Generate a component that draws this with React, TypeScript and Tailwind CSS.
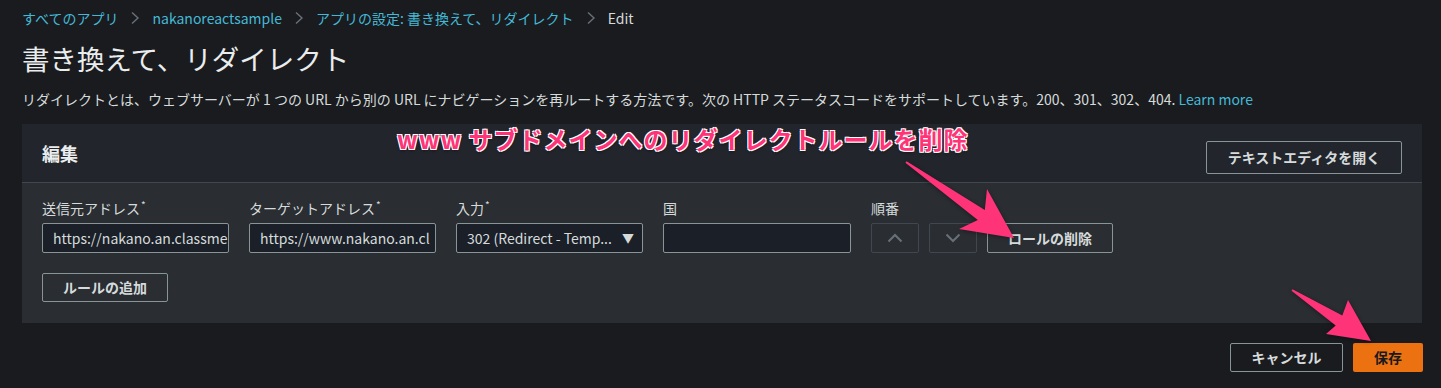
import React from 'react';

const font = '[font-family:"Noto_Sans_CJK_JP","Noto_Sans",sans-serif]';

const Chevron = () => (
  <svg width="10" height="14" viewBox="0 0 10 14" className="mx-[12px]">
    <path d="M2 1.5 L8 7 L2 12.5" fill="none" stroke="#687078" strokeWidth="1.4" />
  </svg>
);

const Field: React.FC<{ label: string; required?: boolean; children: React.ReactNode; width?: string }> = ({ label, required, children, width = 'w-[187px]' }) => (
  <div className={`flex flex-col ${width}`}>
    <div className="h-[20px] text-[14px] leading-[20px] text-[#d5dbdb]">
      {label}
      {required && <span className="relative -top-[5px] ml-[1px] text-[10px]">*</span>}
    </div>
    <div className="mt-[5px]">{children}</div>
  </div>
);

const TextBox: React.FC<{ value: string }> = ({ value }) => (
  <div className="h-[30px] overflow-hidden whitespace-nowrap rounded-[2px] border border-[#879596] bg-[#1b2028] px-[10px] text-[14px] leading-[28px] text-[#d5dbdb]">
    {value}
  </div>
);

const OutlineButton: React.FC<{ children: React.ReactNode; className?: string }> = ({ children, className = '' }) => (
  <button className={`flex items-center justify-center rounded-[2px] border border-[#879596] text-[14px] font-bold text-[#d5dbdb] ${className}`}>
    {children}
  </button>
);

const App: React.FC = () => {
  return (
    <div className={`relative h-[388px] w-[1441px] overflow-hidden bg-[#1a1b1f] pl-[22px] ${font}`}>
      {/* breadcrumb */}
      <div className="flex h-[20px] items-center pt-[16px] text-[14px] text-[#44b9d6]">
        <span>すべてのアプリ</span>
        <Chevron />
        <span>nakanoreactsample</span>
        <Chevron />
        <span>アプリの設定: 書き換えて、リダイレクト</span>
        <Chevron />
        <span className="text-[#d5dbdb]">Edit</span>
      </div>

      <h1 className="mt-[20px] text-[27.5px] leading-[36px] font-normal text-[#eaeded]">書き換えて、リダイレクト</h1>
      <p className="mt-[13px] text-[14px] leading-[20px] text-[#d5dbdb]">
        リダイレクトとは、ウェブサーバーが 1 つの URL から別の URL にナビゲーションを再ルートする方法です。次の HTTP ステータスコードをサポートしています。200、301、302、404.{' '}
        <span className="text-[#44b9d6]">Learn more</span>
      </p>

      {/* panel */}
      <div className="mt-[15px] w-[1400px] bg-[#2a2d32]">
        <div className="flex h-[59px] items-center justify-between border-b border-[#414750] bg-[#22252c] px-[20px]">
          <h2 className="text-[18px] font-bold text-[#eaeded]">編集</h2>
          <OutlineButton className="mt-[8px] h-[33px] w-[196px]">テキストエディタを開く</OutlineButton>
        </div>
        <div className="px-[20px] pt-[15px] pb-[21px]">
          <div className="flex gap-[20px]">
            <Field label="送信元アドレス" required>
              <TextBox value="https://nakano.an.classme" />
            </Field>
            <Field label="ターゲットアドレス" required>
              <TextBox value="https://www.nakano.an.cl" />
            </Field>
            <Field label="入力" required>
              <div className="flex h-[30px] items-center justify-between gap-[6px] rounded-[2px] border border-[#879596] bg-[#1b2028] pr-[8px] pl-[10px] text-[14px] text-[#d5dbdb]">
                <span className="whitespace-nowrap">302 (Redirect - Temp...</span>
                <span className="text-[12px]">▼</span>
              </div>
            </Field>
            <Field label="国" width="w-[188px]">
              <TextBox value="" />
            </Field>
            <Field label="順番" width="w-auto">
              <div className="flex gap-[10px]">
                <button className="flex h-[30px] w-[48px] items-center justify-center rounded-[2px] border border-[#414750]">
                  <svg width="16" height="10" viewBox="0 0 16 10">
                    <path d="M1.5 8.5 L8 2 L14.5 8.5" fill="none" stroke="#687078" strokeWidth="2" />
                  </svg>
                </button>
                <button className="flex h-[30px] w-[48px] items-center justify-center rounded-[2px] border border-[#414750]">
                  <svg width="16" height="10" viewBox="0 0 16 10">
                    <path d="M1.5 1.5 L8 8 L14.5 1.5" fill="none" stroke="#687078" strokeWidth="2" />
                  </svg>
                </button>
                <OutlineButton className="h-[30px] w-[126px]">ロールの削除</OutlineButton>
              </div>
            </Field>
          </div>
          <OutlineButton className="mt-[20px] h-[29px] w-[126px]">ルールの追加</OutlineButton>
        </div>
      </div>

      {/* footer */}
      <div className="mt-[20px] flex w-[1401px] justify-end gap-[10px]">
        <OutlineButton className="h-[29px] w-[113px]">キャンセル</OutlineButton>
        <button className="h-[29px] w-[70px] rounded-[2px] bg-[#ec7211] text-[14px] font-bold text-[#16191f]">保存</button>
      </div>

      {/* annotation overlay */}
      <div className="absolute top-[124px] left-[397px] text-[24px] leading-[30px] font-bold tracking-[1px] whitespace-nowrap text-[#ff3377] [text-shadow:1px_1px_0_#fff,-1px_-1px_0_#fff,1px_-1px_0_#fff,-1px_1px_0_#fff,0_2px_3px_rgba(0,0,0,0.4)]">
        www サブドメインへのリダイレクトルールを削除
      </div>
      <svg className="pointer-events-none absolute top-0 left-0" width="1441" height="388" viewBox="0 0 1441 388">
        <g fill="#ff3377" style={{ filter: 'drop-shadow(0 1px 2px rgba(0,0,0,0.4))' }}>
          <polygon points="906.6,161.2 984.8,210.1 987,189 1014,238 959,229 977.8,219.9 905.4,162.8" />
          <polygon points="1292.5,289.2 1342.3,315.4 1348,300 1371,341 1326,334 1335.7,325.4 1291.5,290.8" />
        </g>
      </svg>
    </div>
  );
};

export default App;
